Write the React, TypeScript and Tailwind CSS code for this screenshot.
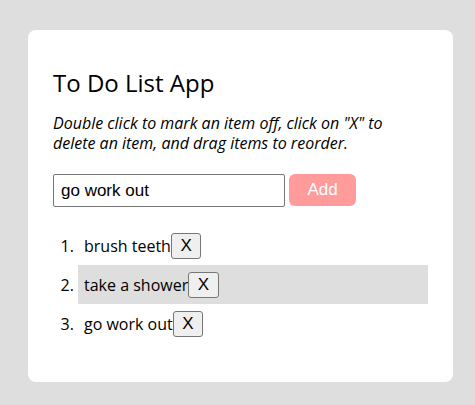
import React from "react";

export default function App() {
  const items = ["brush teeth", "take a shower", "go work out"];
  return (
    <div className="min-h-[405px] w-[475px] bg-[#dedede] pt-[30px] pl-[28px] overflow-hidden" style={{ fontFamily: '"Open Sans", sans-serif' }}>
      <div className="w-[425px] h-[352px] bg-white rounded-[8px] px-[25px] pt-[36px] text-black">
        <h1 className="text-[24px] leading-[33px] font-normal">To Do List App</h1>
        <p className="mt-[14px] text-[16px] leading-[20px] italic">
          Double click to mark an item off, click on "X" to delete an item, and drag items to reorder.
        </p>
        <form className="mt-[21px] flex items-start gap-[4px]" onSubmit={(e) => e.preventDefault()}>
          <input
            defaultValue="go work out"
            className="w-[232px] h-[33px] border border-[#767676] rounded-[2px] px-[7px] text-[17px] text-black outline-none"
            style={{ fontFamily: '"Liberation Sans", Arial, sans-serif' }}
          />
          <button
            type="submit"
            className="w-[67px] h-[32px] bg-[#ff9b9b] text-white rounded-[6px] text-[17px]"
            style={{ fontFamily: '"Liberation Sans", Arial, sans-serif' }}
          >
            Add
          </button>
        </form>
        <ol className="mt-[19px] list-decimal pl-[25px] text-[16px] leading-[26px]">
          {items.map((item, i) => (
            <li key={item} className={`py-[6.5px] pl-[6px] ${i === 1 ? "bg-[#dedede]" : ""}`}>
              {item}
              <button
                className="inline-block align-top border border-[#767676] rounded-[3px] bg-[#efefef] px-[8.5px] h-[26px] leading-[24px] text-[17px] text-black"
                style={{ fontFamily: '"Liberation Sans", Arial, sans-serif' }}
              >
                X
              </button>
            </li>
          ))}
        </ol>
      </div>
    </div>
  );
}
